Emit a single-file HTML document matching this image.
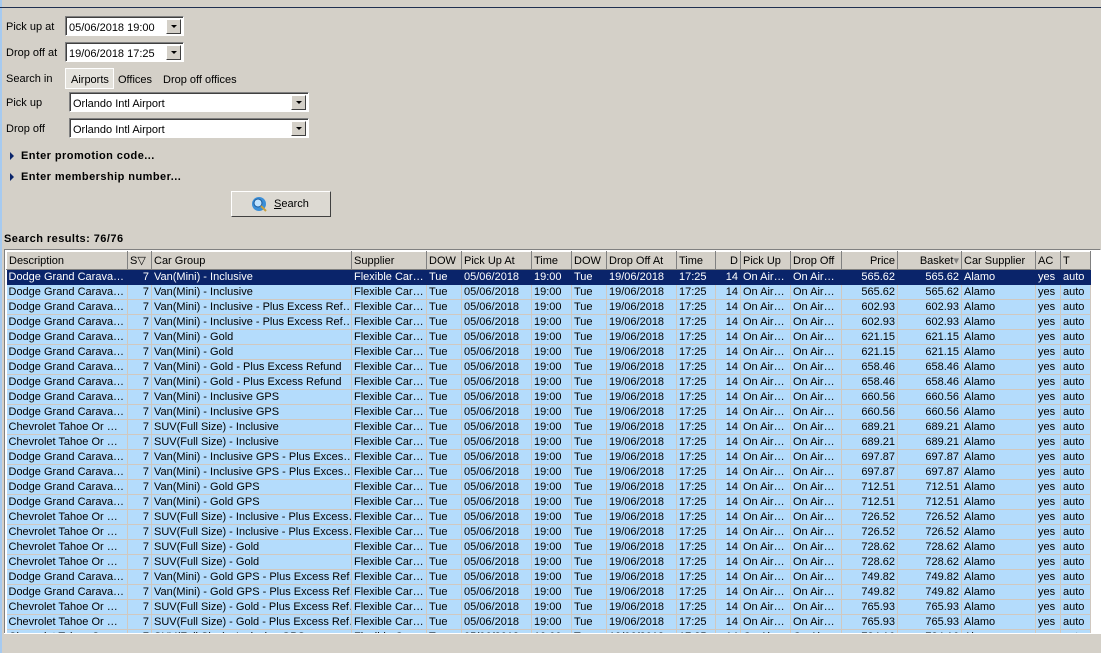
<!DOCTYPE html>
<html><head><style>
*{margin:0;padding:0;box-sizing:border-box}
body{width:1101px;height:653px;background:#d4d0c8;font-family:"Liberation Sans",sans-serif;font-size:11px;color:#000;position:relative;overflow:hidden}
.a{position:absolute;white-space:nowrap}
.inp{position:absolute;background:#fff;border:1px solid;border-color:#808080 #fff #fff #808080;box-shadow:inset 1px 1px 0 #404040;padding:4px 3px 0;height:20px;line-height:14px}
.dd{position:absolute;right:2px;top:2px;width:15px;height:15px;background:#d4d0c8;border:1px solid;border-color:#fff #404040 #404040 #fff}
.dd:after{content:"";position:absolute;left:4px;top:5px;border:3px solid transparent;border-top:3px solid #000}
.tri{position:absolute;width:0;height:0;border:4px solid transparent;border-left:4px solid #0a246a}
.b{font-weight:bold;letter-spacing:0.45px}
table{position:absolute;left:6px;top:251px;border-collapse:collapse;table-layout:fixed;width:1085px}
td,th{height:15px;padding:0 2px;overflow:hidden;white-space:nowrap;font-weight:normal;text-align:left;line-height:14px}
th{height:18px;background:#d4d0c8;border:1px solid;border-color:#fff #808080 #808080 #fff}
td{background:#b4dcfc;border-right:1px solid #d0c8c0;border-bottom:1px solid #d0c8c0}
tr.s td{background:#0a246a;color:#fff;border-color:#0a246a}
.r{text-align:right}
</style></head><body>
<div class="a" style="left:0;top:0;width:2px;height:653px;background:#a6caf0"></div>
<div class="a" style="left:0;top:7px;width:1101px;height:1px;background:#203050"></div>
<div class="a" style="left:6px;top:21px">Pick up at</div>
<div class="inp" style="left:65px;top:16px;width:119px">05/06/2018 19:00<div class="dd"></div></div>
<div class="a" style="left:6px;top:47px">Drop off at</div>
<div class="inp" style="left:65px;top:42px;width:119px">19/06/2018 17:25<div class="dd"></div></div>
<div class="a" style="left:6px;top:73px">Search in</div>
<div class="a" style="left:65px;top:68px;width:49px;height:21px;border:1px solid #fff;background:#e4e2dc;padding:5px 0 0 5px">Airports</div>
<div class="a" style="left:118px;top:74px">Offices</div>
<div class="a" style="left:163px;top:74px">Drop off offices</div>
<div class="a" style="left:6px;top:97px">Pick up</div>
<div class="inp" style="left:69px;top:92px;width:240px">Orlando Intl Airport<div class="dd"></div></div>
<div class="a" style="left:6px;top:123px">Drop off</div>
<div class="inp" style="left:69px;top:118px;width:240px">Orlando Intl Airport<div class="dd"></div></div>
<div class="tri" style="left:10px;top:152px"></div>
<div class="a b" style="left:21px;top:150px">Enter promotion code...</div>
<div class="tri" style="left:10px;top:173px"></div>
<div class="a b" style="left:21px;top:171px">Enter membership number...</div>
<div class="a" style="left:231px;top:191px;width:100px;height:26px;border:1px solid;border-color:#fff #404040 #404040 #fff;background:#dcd9d2"></div>
<svg class="a" style="left:251px;top:196px" width="17" height="17"><circle cx="8" cy="8" r="7" fill="#3b8fd8"/><circle cx="7" cy="7" r="4" fill="#bfe3ff" stroke="#1a5a9a"/><path d="M10 10 L15 15" stroke="#c8a040" stroke-width="2"/></svg>
<div class="a" style="left:274px;top:198px"><u>S</u>earch</div>
<div class="a b" style="left:4px;top:233px">Search results: 76/76</div>
<div class="a" style="left:4px;top:249px;width:1097px;height:386px;border:1px solid;border-color:#808080 #fff #fff #808080;background:#fff"></div>
<table>
<colgroup><col style="width:121px"><col style="width:24px"><col style="width:200px"><col style="width:75px"><col style="width:35px"><col style="width:70px"><col style="width:40px"><col style="width:35px"><col style="width:70px"><col style="width:39px"><col style="width:25px"><col style="width:50px"><col style="width:51px"><col style="width:56px"><col style="width:64px"><col style="width:74px"><col style="width:25px"><col style="width:30px"></colgroup>
<tr><th>Description</th><th>S&#9661;</th><th>Car Group</th><th>Supplier</th><th>DOW</th><th>Pick Up At</th><th>Time</th><th>DOW</th><th>Drop Off At</th><th>Time</th><th class="r">D</th><th>Pick Up</th><th>Drop Off</th><th class="r">Price</th><th class="r">Basket<span style="color:#808080">&#9662;</span></th><th>Car Supplier</th><th>AC</th><th>T</th></tr>
<tbody id="b"></tbody>
</table>
<script>
var d=[["D","Van(Mini) - Inclusive","565.62"],["D","Van(Mini) - Inclusive","565.62"],["D","Van(Mini) - Inclusive - Plus Excess Ref…","602.93"],["D","Van(Mini) - Inclusive - Plus Excess Ref…","602.93"],["D","Van(Mini) - Gold","621.15"],["D","Van(Mini) - Gold","621.15"],["D","Van(Mini) - Gold - Plus Excess Refund","658.46"],["D","Van(Mini) - Gold - Plus Excess Refund","658.46"],["D","Van(Mini) - Inclusive GPS","660.56"],["D","Van(Mini) - Inclusive GPS","660.56"],["C","SUV(Full Size) - Inclusive","689.21"],["C","SUV(Full Size) - Inclusive","689.21"],["D","Van(Mini) - Inclusive GPS - Plus Exces…","697.87"],["D","Van(Mini) - Inclusive GPS - Plus Exces…","697.87"],["D","Van(Mini) - Gold GPS","712.51"],["D","Van(Mini) - Gold GPS","712.51"],["C","SUV(Full Size) - Inclusive - Plus Excess…","726.52"],["C","SUV(Full Size) - Inclusive - Plus Excess…","726.52"],["C","SUV(Full Size) - Gold","728.62"],["C","SUV(Full Size) - Gold","728.62"],["D","Van(Mini) - Gold GPS - Plus Excess Ref…","749.82"],["D","Van(Mini) - Gold GPS - Plus Excess Ref…","749.82"],["C","SUV(Full Size) - Gold - Plus Excess Ref…","765.93"],["C","SUV(Full Size) - Gold - Plus Excess Ref…","765.93"],["C","SUV(Full Size) - Inclusive GPS","784.16"]];
var h="";d.forEach(function(r,i){h+='<tr'+(i==0?' class="s"':'')+'><td>'+(r[0]=="D"?"Dodge Grand Carava…":"Chevrolet Tahoe Or …")+'</td><td class="r">7</td><td>'+r[1]+'</td><td>Flexible Car…</td><td>Tue</td><td>05/06/2018</td><td>19:00</td><td>Tue</td><td>19/06/2018</td><td>17:25</td><td class="r">14</td><td>On Air…</td><td>On Air…</td><td class="r">'+r[2]+'</td><td class="r">'+r[2]+'</td><td>Alamo</td><td>yes</td><td>auto</td></tr>'});
document.getElementById("b").innerHTML=h;
</script>
<div class="a" style="left:4px;top:633px;width:1097px;height:20px;background:#d4d0c8;border-top:1px solid #fff"></div>
</body></html>
